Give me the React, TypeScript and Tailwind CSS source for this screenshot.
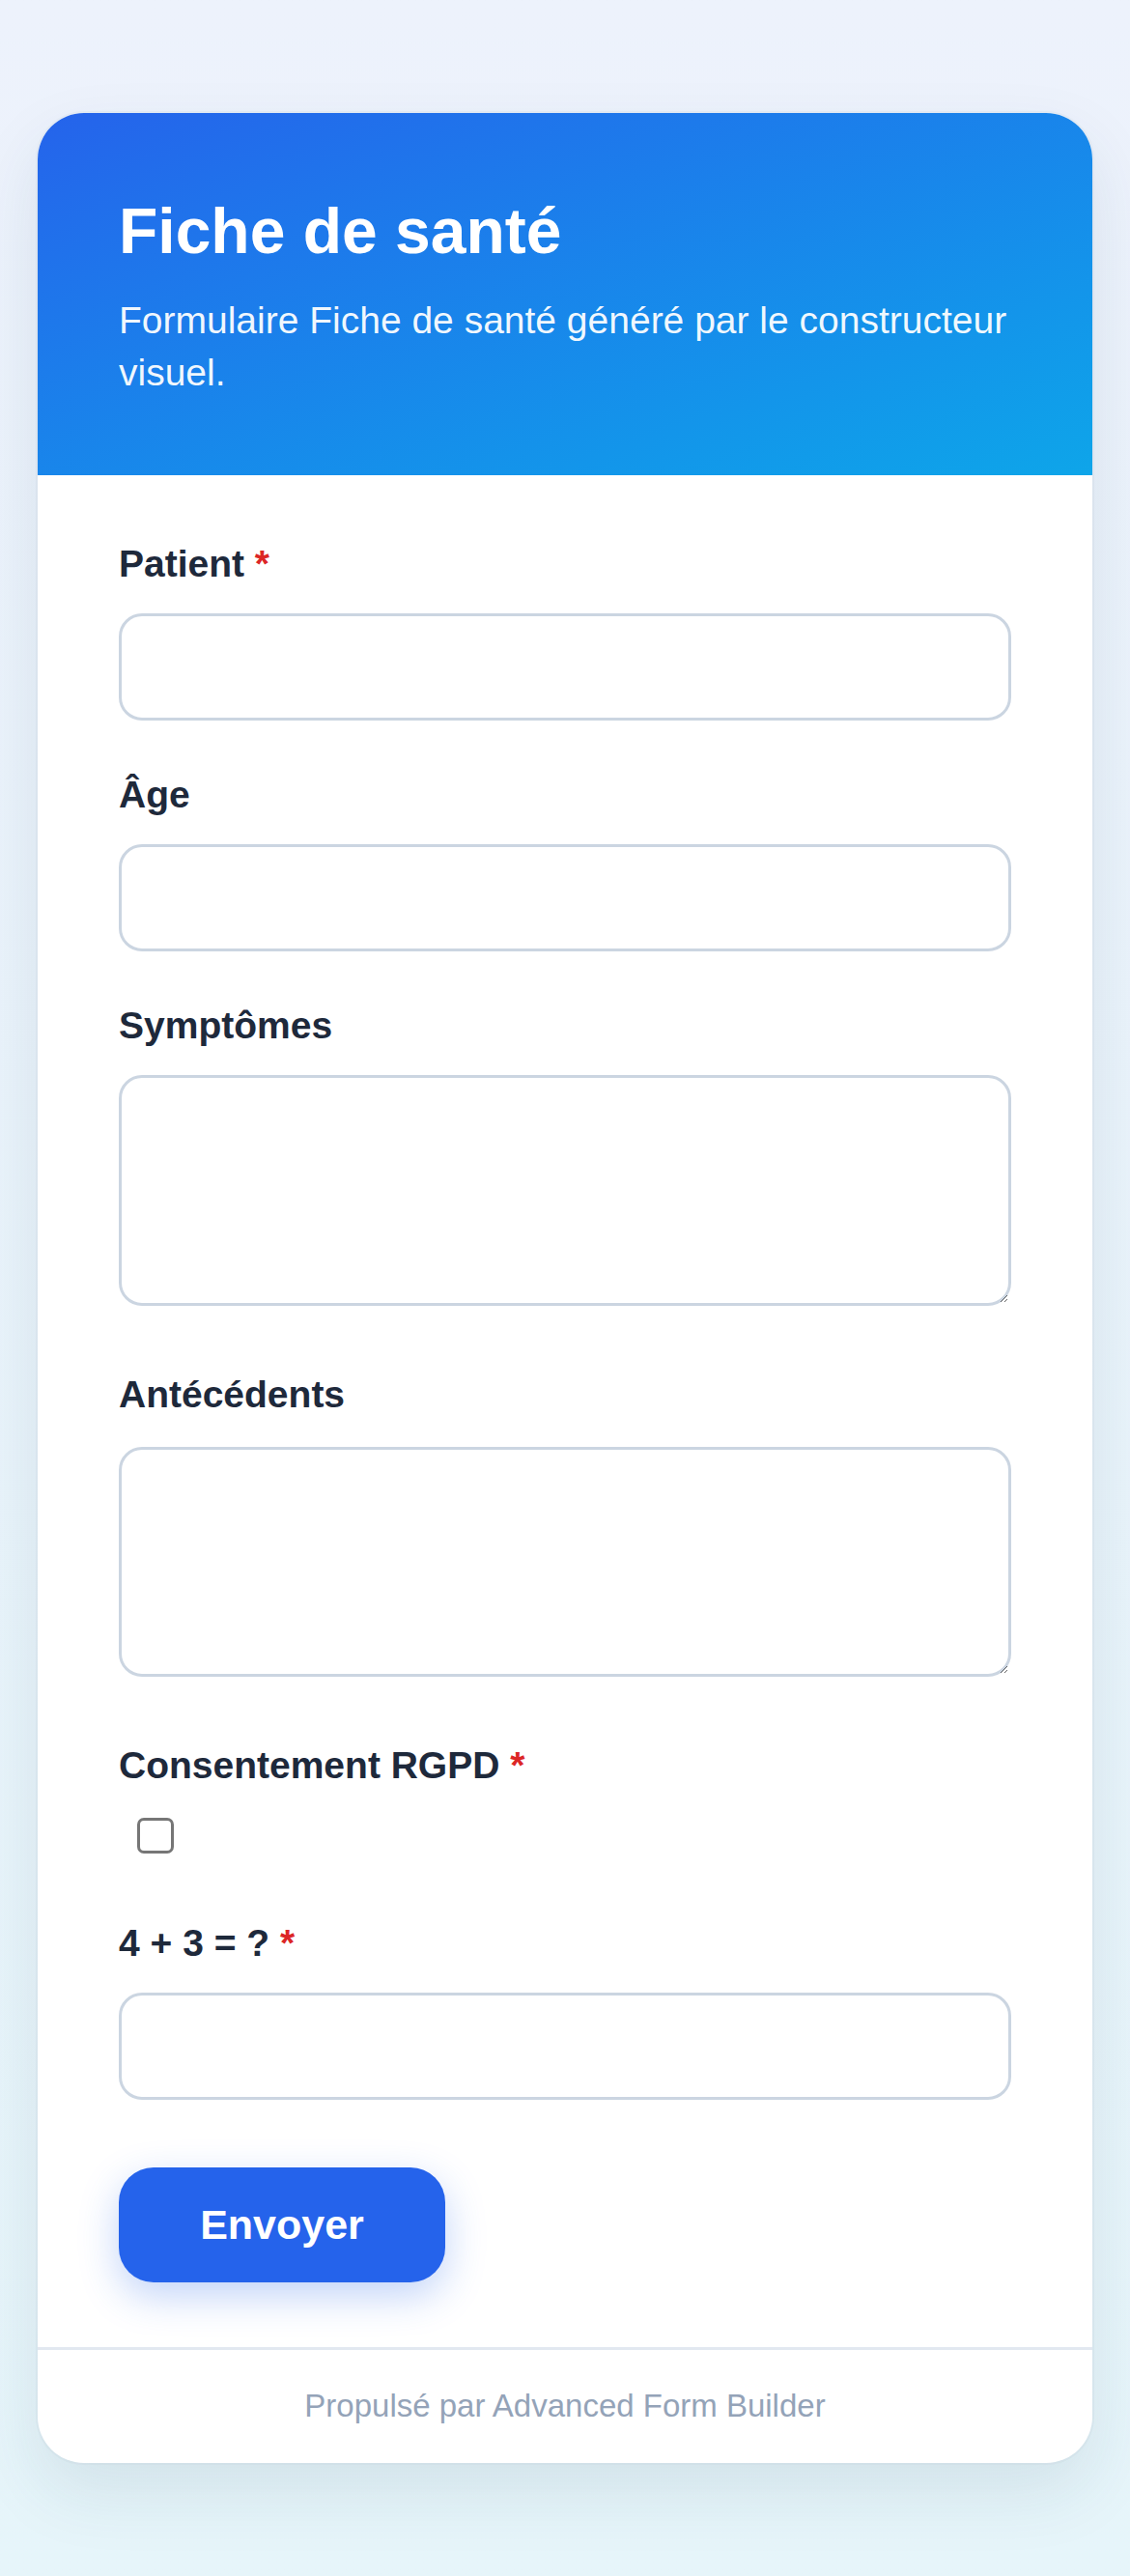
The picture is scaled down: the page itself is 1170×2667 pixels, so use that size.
import { useState } from "react";

type FieldProps = {
  label: string;
  required?: boolean;
  labelGap?: string;
  children: React.ReactNode;
  className?: string;
};

function Field({ label, required, labelGap = "mb-[27px]", children, className }: FieldProps) {
  return (
    <div className={className}>
      <label className={`block text-[39px] leading-[48px] font-bold text-[#1e293b] ${labelGap}`}>
        {label}
        {required && <span className="text-[#dc2626]"> *</span>}
      </label>
      {children}
    </div>
  );
}

const inputCls =
  "block w-full h-[111px] rounded-[24px] border-[3px] border-[#cbd5e1] bg-white px-[42px] text-[39px] text-[#1e293b] outline-none focus:border-[#2563eb]";

const areaCls =
  "block w-full rounded-[24px] border-[3px] border-[#cbd5e1] bg-white px-[42px] py-[30px] text-[39px] text-[#1e293b] outline-none resize-y focus:border-[#2563eb]";

export default function App() {
  const [consent, setConsent] = useState(false);

  return (
    <div className="min-h-[2667px] bg-gradient-to-b from-[#edf2fc] to-[#e6f5fa] px-[39px] py-[117px] font-['Liberation_Sans',Arial,sans-serif]">
      <div className="overflow-hidden rounded-[48px] bg-white shadow-[0_0_0_2px_rgba(148,163,184,0.08),0_30px_70px_rgba(30,64,90,0.10)]">
        {/* Header */}
        <div className="bg-gradient-to-br from-[#2563eb] to-[#0ea5e9] px-[84px] pt-[83px] pb-[79px]">
          <h1 className="text-[66px] leading-[79px] font-bold text-white">Fiche de santé</h1>
          <p className="mt-[26px] text-[39px] leading-[54px] text-white/95">
            Formulaire Fiche de santé généré par le constructeur visuel.
          </p>
        </div>

        {/* Form */}
        <form className="px-[84px] pt-[68px] pb-[67px]" onSubmit={(e) => e.preventDefault()}>
          <Field label="Patient" required>
            <input type="text" className={inputCls} />
          </Field>

          <Field label="Âge" className="mt-[53px]">
            <input type="number" className={inputCls} />
          </Field>

          <Field label="Symptômes" className="mt-[53px]">
            <textarea className={`${areaCls} h-[239px]`} />
          </Field>

          <Field label="Antécédents" labelGap="mb-[30px]" className="mt-[68px]">
            <textarea className={`${areaCls} h-[238px]`} />
          </Field>

          <Field label="Consentement RGPD" required labelGap="mb-[30px]" className="mt-[68px]">
            <input
              type="checkbox"
              checked={consent}
              onChange={(e) => setConsent(e.target.checked)}
              className="ml-[19px] block h-[37px] w-[38px] appearance-none rounded-[7px] border-[3px] border-[#767676] bg-white checked:bg-[#2563eb] checked:border-[#2563eb]"
            />
          </Field>

          <Field label="4 + 3 = ?" required className="mt-[69px]">
            <input type="text" className={inputCls} />
          </Field>

          <button
            type="submit"
            className="mt-[70px] h-[119px] w-[338px] rounded-[36px] bg-[#2563eb] text-[43px] font-bold text-white shadow-[0_14px_40px_rgba(37,99,235,0.28)]"
          >
            Envoyer
          </button>
        </form>

        {/* Footer */}
        <div className="border-t-[3px] border-[#e2e8f0] pt-[33px] pb-[34px] text-center text-[33px] leading-[50px] text-[#94a3b8]">
          Propulsé par Advanced Form Builder
        </div>
      </div>
    </div>
  );
}
